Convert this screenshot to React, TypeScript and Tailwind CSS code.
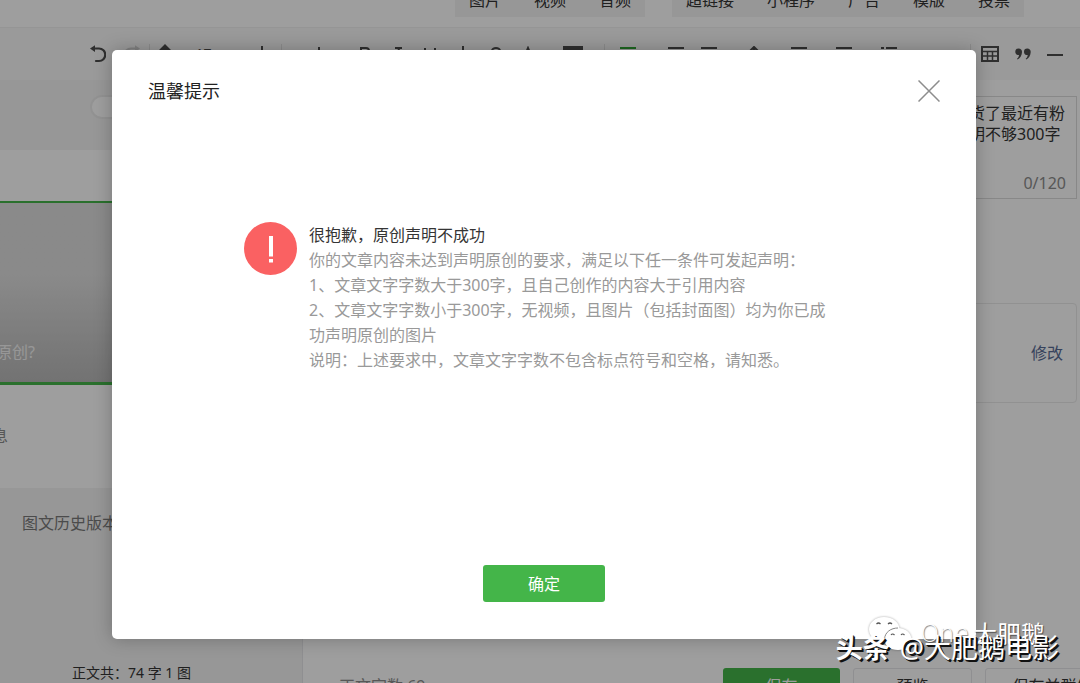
import type { ReactNode } from "react";

const ICON = "h-4 w-4 shrink-0";

function Bars({ className = "" }: { className?: string }) {
  return (
    <svg viewBox="0 0 16 16" className={`${ICON} ${className}`} fill="currentColor">
      <path d="M0 1h16v2H0zM0 5h10v2H0zM0 9h16v2H0zM0 13h10v2H0z" />
    </svg>
  );
}

function Stroke({ d, className = "" }: { d: string; className?: string }) {
  return (
    <svg viewBox="0 0 16 16" className={`${ICON} ${className}`} fill="none" stroke="currentColor" strokeWidth="2">
      <path d={d} />
    </svg>
  );
}

function Undo({ className = "" }: { className?: string }) {
  return (
    <svg viewBox="0 0 16 18" className={`h-[18px] w-4 shrink-0 ${className}`}>
      <path d="M3 3.500h6a5.700 5.700 0 0 1 0 12.500H6" fill="none" stroke="currentColor" strokeWidth="2.200" strokeLinecap="round" />
      <path d="M0 3.500 5 .3v6.600z" fill="currentColor" />
    </svg>
  );
}

function TableIcon() {
  return (
    <svg viewBox="0 0 18 16" className="h-4 w-[18px] shrink-0" fill="none" stroke="currentColor">
      <path d="M1 1h16v14H1z" strokeWidth="2" />
      <path d="M1 5.500h16M1 10h16M6.500 5.500V15M11.500 5.500V15" strokeWidth="1.500" />
    </svg>
  );
}

function QuoteIcon() {
  return (
    <svg viewBox="0 0 16 12" className="h-3 w-4 shrink-0" fill="currentColor">
      <path d="M3.600.5A3.300 3.300 0 0 1 7 4c0 3.300-1.800 6-4.400 7.500l-.6-.7C3.300 9.600 4 8.400 4 7 1.800 7.300.3 5.700.3 3.900A3.300 3.300 0 0 1 3.600.5zM12.300.5A3.300 3.300 0 0 1 15.700 4c0 3.300-1.800 6-4.400 7.500l-.6-.7c1.300-1.200 2-2.400 2-3.800C10.500 7.300 9 5.700 9 3.900A3.300 3.300 0 0 1 12.300.5z" />
    </svg>
  );
}

function Tool({ label, className, children }: { label: string; className: string; children: ReactNode }) {
  return (
    <button type="button" aria-label={label} className={`flex h-full shrink-0 items-center justify-center ${className}`}>
      {children}
    </button>
  );
}

const Divider = () => <span className="h-5 w-px shrink-0 bg-[#e0e0e0]" />;

function Toolbar() {
  return (
    <div className="flex h-[52px] shrink-0 items-center bg-[#f8f8f8] pl-[82px] text-[#4c4c4c]">
      <Tool label="撤销" className="w-8"><Undo /></Tool>
      <Tool label="重做" className="w-[35px]"><Undo className="-scale-x-100 text-[#d0d0d0]" /></Tool>
      <Divider />
      <Tool label="清除格式" className="w-[30px]">
        <svg viewBox="0 0 16 20" className="h-5 w-4" fill="currentColor"><path d="m8 0 6 6H2zM4 7h8v10H4z" /></svg>
      </Tool>
      <Tool label="字号" className="w-[63px]"><span className="text-sm leading-4">17px</span></Tool>
      <Tool label="增加" className="w-[38px]"><Stroke d="M8 0v16M1 8h14" /></Tool>
      <Divider />
      <Tool label="格式刷" className="w-[68px]"><Stroke d="M11 1v6M4 8h9" /></Tool>
      <Tool label="加粗" className="w-[30px]"><Stroke d="M4 2h5a3 3 0 0 1 0 6H4zM4 8h6a3 3 0 0 1 0 6H4z" /></Tool>
      <Tool label="斜体" className="w-9"><Stroke d="M5 2h7M9 2 7 14M4 14h7" /></Tool>
      <Tool label="下划线" className="w-7"><Stroke d="M3 2v6a5 5 0 0 0 10 0V2M2 15h12" /></Tool>
      <Tool label="字体颜色" className="w-[38px]"><Stroke d="M8 0v12M3 15h10" /></Tool>
      <Tool label="删除线" className="w-7"><Stroke d="M12 5a4 3 0 0 0-8 0c0 4 8 2 8 6a4 3 0 0 1-8 0" /></Tool>
      <Tool label="背景色" className="w-9"><Stroke d="m3 14 5-12 5 12M5 10h6" /></Tool>
      <Tool label="图块" className="w-[54px]">
        <svg viewBox="0 0 20 16" className="h-4 w-5" fill="currentColor"><path d="M0 0h20v16H0z" /></svg>
      </Tool>
      <span className="w-1 shrink-0" />
      <Divider />
      <Tool label="左对齐" className="w-[46px] text-[#2fa535]"><Bars /></Tool>
      <Tool label="居中" className="w-[50px]"><Bars /></Tool>
      <Tool label="右对齐" className="w-4"><Bars /></Tool>
      <Tool label="行高" className="w-[74px]"><Stroke d="m4 5 4-4 4 4M8 1v14" /></Tool>
      <Tool label="段前距" className="w-4"><Bars /></Tool>
      <Tool label="段后距" className="w-[74px]"><Bars /></Tool>
      <Tool label="列表" className="w-4">
        <svg viewBox="0 0 16 16" className="h-4 w-4" fill="currentColor"><path d="M0 1h3v2H0zM5 1h11v2H5zM0 7h3v2H0zM5 7h11v2H5z" /></svg>
      </Tool>
      <span className="w-[73px] shrink-0" />
      <Divider />
      <Tool label="表格" className="w-[38px]"><TableIcon /></Tool>
      <Tool label="引用" className="w-7"><QuoteIcon /></Tool>
      <Tool label="分隔线" className="w-9"><Stroke d="M0 9h16" /></Tool>
    </div>
  );
}

function InsertGroup({ items }: { items: string[] }) {
  return (
    <div className="flex h-10 gap-[33px] bg-[#f4f4f4] px-3.5 pt-1.5 leading-5">
      {items.map((t) => (
        <button type="button" key={t} className="shrink-0">{t}</button>
      ))}
    </div>
  );
}

function Page() {
  return (
    <div className="flex h-screen flex-col overflow-hidden bg-white text-base text-[#353535]">
      <div className="flex h-[28px] shrink-0 items-end gap-[27px] overflow-hidden border-b border-[#f0f0f0] pb-2.5 pl-[455px]">
        <InsertGroup items={["图片", "视频", "音频"]} />
        <InsertGroup items={["超链接", "小程序", "广告", "模版", "投票"]} />
      </div>
      <Toolbar />
      <div className="flex min-h-0 flex-1">
        <aside className="flex w-[302px] shrink-0 flex-col bg-[#f4f4f4]">
          <div className="flex h-[70px] items-center pb-4 pl-[90px]">
            <button type="button" role="switch" aria-checked="false" aria-label="开关" className="h-6 w-11 rounded-full border-2 border-[#ececec] bg-white" />
          </div>
          <div className="h-[51px] bg-white" />
          <div className="flex h-[184px] items-end overflow-hidden border-t-2 border-b-[3px] border-[#44b549] bg-linear-to-b from-[#dfdfdf] from-40% to-[#b9b9b9] pb-[18px]">
            <span className="-ml-1 leading-6 text-[#f4f4f4]">原创?</span>
          </div>
          <div className="h-[103px] bg-white pt-[39px]">
            <span className="-ml-2 block leading-6 text-[#8d8d8d]">息</span>
          </div>
          <span className="mt-[23px] pl-[22px] leading-6 text-[#7a7a7a]">图文历史版本</span>
          <span className="mt-auto mb-[-2px] pl-[72px] text-sm leading-6">正文共：74 字 1 图</span>
        </aside>
        <main className="flex min-w-0 flex-1 flex-col border-l border-[#e7e7eb]">
          <div className="ml-auto min-h-0 w-[360px] flex-1 overflow-hidden pt-4 pr-[3px]">
            <div className="flex h-[103px] flex-col border border-[#dcdcdc] pr-2.5">
              <textarea
                aria-label="摘要"
                className="h-[66px] w-full resize-none overflow-hidden pt-1.5 pl-[248px] leading-[21px] whitespace-pre outline-none"
                defaultValue={"货了最近有粉\n明不够300字"}
              />
              <span className="self-end pt-2 leading-6 text-[#8d8d8d]">0/120</span>
            </div>
            <div className="mt-[104px] flex h-[100px] items-center justify-end rounded border border-[#eaeaea] pr-[13px]">
              <a href="#edit" className="text-[#576b95]">修改</a>
            </div>
          </div>
          <footer className="flex h-[43px] shrink-0 items-start gap-[13px] overflow-hidden pt-7 whitespace-nowrap">
            <span className="mr-auto pl-9 leading-9 text-[#8d8d8d]">正文字数 69</span>
            <button type="button" className="h-9 w-[117px] shrink-0 rounded-[3px] bg-[#44b549] text-white">保存</button>
            <button type="button" className="h-9 w-[119px] shrink-0 rounded-[3px] border border-[#e7e7eb]">预览</button>
            <button type="button" className="-mr-10 h-9 w-[135px] shrink-0 rounded-[3px] border border-[#e7e7eb]">保存并群发</button>
          </footer>
        </main>
      </div>
    </div>
  );
}

function Dialog() {
  return (
    <div className="absolute inset-0 flex items-center justify-center bg-black/38 pt-1.5 pl-2">
      <div
        role="dialog"
        aria-labelledby="dialog-title"
        className="flex min-h-[589px] w-[864px] max-w-full flex-col rounded-[5px] bg-white shadow-[0_0_18px_rgba(0,0,0,0.25)]"
      >
        <header className="flex items-center justify-between px-9 py-7">
          <h1 id="dialog-title" className="text-lg leading-[26px] text-[#222]">温馨提示</h1>
          <button type="button" aria-label="关闭">
            <svg viewBox="0 0 22 22" className="h-[22px] w-[22px]" stroke="#8d8d8d" strokeWidth="1.500">
              <path d="M.5.5l21 21M21.500.5l-21 21" />
            </svg>
          </button>
        </header>
        <div className="flex flex-1 gap-3 pt-[90px] pl-[132px]">
          <svg viewBox="0 0 53 53" className="h-[53px] w-[53px] shrink-0">
            <circle cx="26.500" cy="26.500" r="26.500" fill="#fa6162" />
            <path d="M25 14h4v20.500h-4zM25 37h4v3.500h-4z" fill="#fff" />
          </svg>
          <div className="max-w-[525px] pt-px leading-[25px] text-[#999]">
            <h2 className="text-[#353535]">很抱歉，原创声明不成功</h2>
            <p>你的文章内容未达到声明原创的要求，满足以下任一条件可发起声明：</p>
            <p>1、文章文字字数大于300字，且自己创作的内容大于引用内容</p>
            <p>2、文章文字字数小于300字，无视频，且图片（包括封面图）均为你已成功声明原创的图片</p>
            <p>说明：上述要求中，文章文字字数不包含标点符号和空格，请知悉。</p>
          </div>
        </div>
        <footer className="flex justify-center pb-[37px]">
          <button type="button" className="h-[37px] w-[122px] rounded-[3px] bg-[#44b549] text-base text-white">确定</button>
        </footer>
      </div>
    </div>
  );
}

function Watermarks() {
  return (
    <div className="pointer-events-none absolute right-[21px] bottom-[17px] text-white">
      <div className="absolute right-3.5 bottom-3.5 flex items-center gap-2 whitespace-nowrap">
        <svg viewBox="0 0 44 36" className="h-9 w-11 drop-shadow-[0_0_1px_rgba(0,0,0,0.35)]">
          <path d="M16 1C7.500 1 1 6.500 1 13.500c0 4 2 7 5.500 9.500L5 27.500l5-2.500c2 .6 4 1 6 1 9 0 15.500-5.500 15.500-12.500S25 1 16 1z" fill="#fff" />
          <path d="M30 12c-7.500 0-13.500 5-13.500 11.500S22.500 34 30 34c2 0 3.800-.4 5.500-1l4.500 2-1.200-4c3-2 4.700-4.500 4.700-7.500C43.500 17 37.500 12 30 12z" fill="#fff" />
          <path d="M16.500 23C17 16 23 12 30 12" fill="none" stroke="#888" strokeWidth="1" />
          <path d="M8.500 8q2-2 4 0M20 8q2-2 4 0M23 19q1.500-2 3.500 0M33 19q1.500-2 3.500 0" fill="none" stroke="#555" strokeWidth="1.200" />
        </svg>
        <span className="flex items-center gap-1 text-2xl leading-8 [text-shadow:1px_1px_1px_rgba(0,0,0,0.5)]">
          <span className="font-['DejaVu_Sans',sans-serif] font-light">One</span>
          <span>大肥鹅</span>
        </span>
      </div>
      <div className="relative flex gap-2.5 text-[27px] leading-9 whitespace-nowrap [text-shadow:2px_2px_0_#111,1px_1px_0_#111]">
        <b>头条</b>
        <span>@大肥鹅电影</span>
      </div>
    </div>
  );
}

export default function App() {
  return (
    <div className="relative overflow-hidden font-['Noto_Sans','Noto_Sans_CJK_SC',sans-serif]">
      <Page />
      <Dialog />
      <Watermarks />
    </div>
  );
}
